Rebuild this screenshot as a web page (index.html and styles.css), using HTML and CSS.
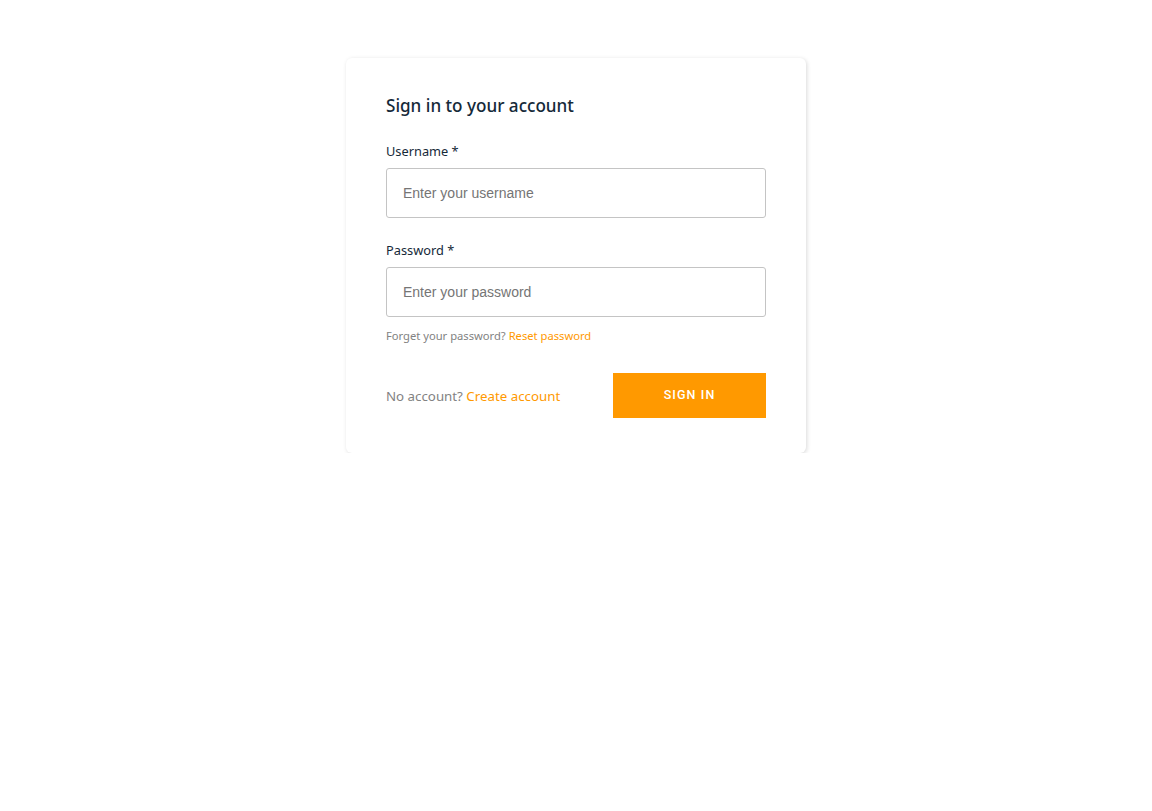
FILE: index.html
```html
<!DOCTYPE html>
<html lang="en">
<head>
<meta charset="utf-8">
<title>Sign in</title>
<link rel="stylesheet" href="styles.css">
</head>
<body>
<div class="card">
  <div class="title">Sign in to your account</div>
  <div class="field">
    <label class="label">Username *</label>
    <input class="input" type="text" placeholder="Enter your username">
  </div>
  <div class="field second">
    <label class="label">Password *</label>
    <input class="input" type="password" placeholder="Enter your password">
    <div class="hint">Forget your password? <a class="link" href="#">Reset password</a></div>
  </div>
  <div class="footer">
    <span class="muted">No account? <a class="link" href="#">Create account</a></span>
    <button class="btn">SIGN IN</button>
  </div>
</div>
</body>
</html>
```
FILE: styles.css
```css
html, body {
  margin: 0;
  padding: 0;
  background: #ffffff;
}
body {
  padding-top: 58px;
  font-family: "Noto Sans", "Open Sans", sans-serif;
  color: #152939;
}
.card {
  width: 460px;
  box-sizing: border-box;
  margin: 0 auto;
  padding: 35px 40px;
  background: #fff;
  border-radius: 6px;
  box-shadow: 1px 1px 4px 0 rgba(0,0,0,0.15);
}
.title {
  font-size: 17.1px;
  font-weight: 500;
  line-height: 24px;
  color: #152939;
  padding-top: 1px;
  margin-bottom: 25px;
}
.field {
  display: flex;
  flex-direction: column;
}
.second {
  margin-top: 24px;
}
.label {
  font-size: 12.8px;
  line-height: 17px;
  color: #152939;
  margin-bottom: 8px;
}
.input {
  box-sizing: border-box;
  width: 380px;
  height: 50px;
  padding: 0 16px;
  border: 1px solid #c4c4c4;
  border-radius: 3px;
  font-family: "Liberation Sans", Arial, sans-serif;
  font-size: 14px;
  color: #152939;
  outline: none;
}
.input::placeholder {
  color: #757575;
}
.hint {
  margin-top: 11px;
  font-size: 11.2px;
  line-height: 16px;
  color: #828282;
}
.link {
  color: #ff9900;
  text-decoration: none;
}
.footer {
  margin-top: 29px;
  display: flex;
  justify-content: space-between;
  align-items: center;
}
.muted {
  font-size: 13.3px;
  color: #828282;
  padding-top: 1px;
}
.btn {
  width: 153px;
  height: 45px;
  border: none;
  border-radius: 0;
  background: #ff9900;
  color: #fff;
  font-family: Roboto, "Liberation Sans", sans-serif;
  font-size: 12.5px;
  font-weight: 500;
  letter-spacing: 1.1px;
  padding: 0 0 2px 0;
  cursor: pointer;
}
```
